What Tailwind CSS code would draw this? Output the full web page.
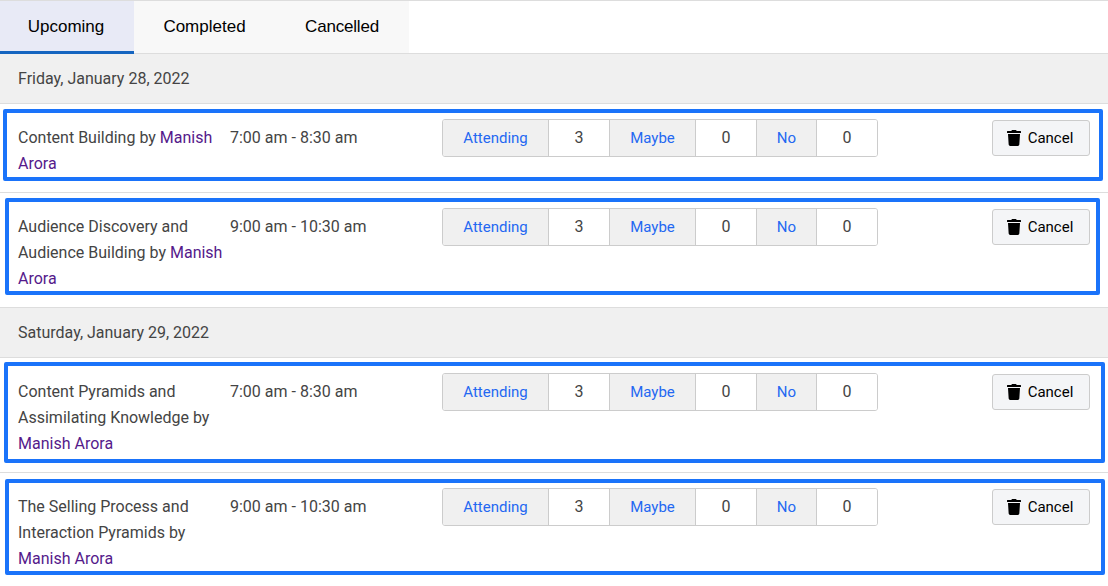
<!DOCTYPE html>
<html lang="en">
<head>
    <meta charset="UTF-8">
    <meta name="viewport" content="width=device-width, initial-scale=1.0">
    <title>Sessions</title>
    <script src="https://cdn.jsdelivr.net/npm/@tailwindcss/browser@4"></script>
</head>
<body class="bg-white font-['Roboto',sans-serif] text-[16px] leading-[26px] text-[#444]">
    <div id="page" class="relative w-[1108px] h-[586px] overflow-hidden">
        <div class="flex h-[54px] border-y border-[#ddd] font-['Liberation_Sans',sans-serif] text-[17px] text-black">
            <div class="w-[134px] h-[53px] pt-[1px] pr-[2px] bg-[#e8eaf6] border-b-[3px] border-[#1565c0] flex items-center justify-center">Upcoming</div>
            <div class="w-[141px] h-[52px] bg-[#f8f8f8] flex items-center justify-center">Completed</div>
            <div class="w-[134px] h-[52px] bg-[#f8f8f8] flex items-center justify-center tracking-[-0.2px]">Cancelled</div>
        </div>
        <div id="list"></div>

        <!-- blue highlight boxes sit on top of the rows -->
        <div class="absolute left-[3px] top-[109px] w-[1100px] h-[72px] border-4 border-[#1a73fa] rounded-[2px]"></div>
        <div class="absolute left-[5px] top-[198px] w-[1095px] h-[97px] border-4 border-[#1a73fa] rounded-[2px]"></div>
        <div class="absolute left-[4px] top-[362px] w-[1101px] h-[101px] border-4 border-[#1a73fa] rounded-[2px]"></div>
        <div class="absolute left-[5px] top-[479px] w-[1100px] h-[96px] border-4 border-[#1a73fa] rounded-[2px]"></div>
    </div>

    <script>
        const days = [
            {
                date: 'Friday, January 28, 2022',
                sessions: [
                    { title: 'Content Building by', time: '7:00 am - 8:30 am' },
                    { title: 'Audience Discovery and Audience Building by', time: '9:00 am - 10:30 am' }
                ]
            },
            {
                date: 'Saturday, January 29, 2022',
                sessions: [
                    { title: 'Content Pyramids and Assimilating Knowledge by', time: '7:00 am - 8:30 am' },
                    { title: 'The Selling Process and Interaction Pyramids by', time: '9:00 am - 10:30 am' }
                ]
            }
        ];

        const labelCell = 'flex items-center justify-center bg-[#f0f0f0] text-[15px] text-[#2468f2] border-r border-[#ccc]';
        const countCell = 'flex items-center justify-center bg-white border-r border-[#ccc]';

        function rsvpGroup() {
            return `
                <div class="flex w-[436px] h-[38px] -mt-[6px] border border-[#ccc] rounded-[3px] overflow-hidden">
                    <div class="${labelCell} w-[106px]">Attending</div>
                    <div class="${countCell} w-[61px]">3</div>
                    <div class="${labelCell} w-[86px]">Maybe</div>
                    <div class="${countCell} w-[61px]">0</div>
                    <div class="${labelCell} w-[60px]">No</div>
                    <div class="flex items-center justify-center bg-white flex-1">0</div>
                </div>`;
        }

        function sessionRow(session) {
            return `
                <div class="flex pl-[18px] pr-[18px] pt-[21px] pb-[15px] border-b border-[#ddd]">
                    <div class="w-[212px] pr-[6px] shrink-0">${session.title} <a class="text-[#551a8b]">Manish Arora</a></div>
                    <div class="w-[212px] shrink-0">${session.time}</div>
                    ${rsvpGroup()}
                    <button class="ml-auto w-[98px] h-[36px] -mt-[5px] pr-[2px] flex items-center justify-center gap-[7px] bg-[#f4f5f7] border border-[#ccc] rounded-[3px] text-[15px] text-black">
                        <svg class="w-[14px] h-[16px]" viewBox="0 0 448 512" fill="currentColor"><path d="M432 32H312l-9.4-18.7A24 24 0 0 0 281.1 0H166.8a23.72 23.72 0 0 0-21.4 13.3L136 32H16A16 16 0 0 0 0 48v32a16 16 0 0 0 16 16h416a16 16 0 0 0 16-16V48a16 16 0 0 0-16-16zM53.2 467a48 48 0 0 0 47.9 45h245.8a48 48 0 0 0 47.9-45L416 128H32z"/></svg>
                        Cancel
                    </button>
                </div>`;
        }

        document.getElementById('list').innerHTML = days.map(day => `
            <div class="h-[50px] pl-[18px] flex items-center bg-[#f0f0f0] border-b border-[#ddd]">${day.date}</div>
            ${day.sessions.map(sessionRow).join('')}
        `).join('');
    </script>
</body>
</html>
